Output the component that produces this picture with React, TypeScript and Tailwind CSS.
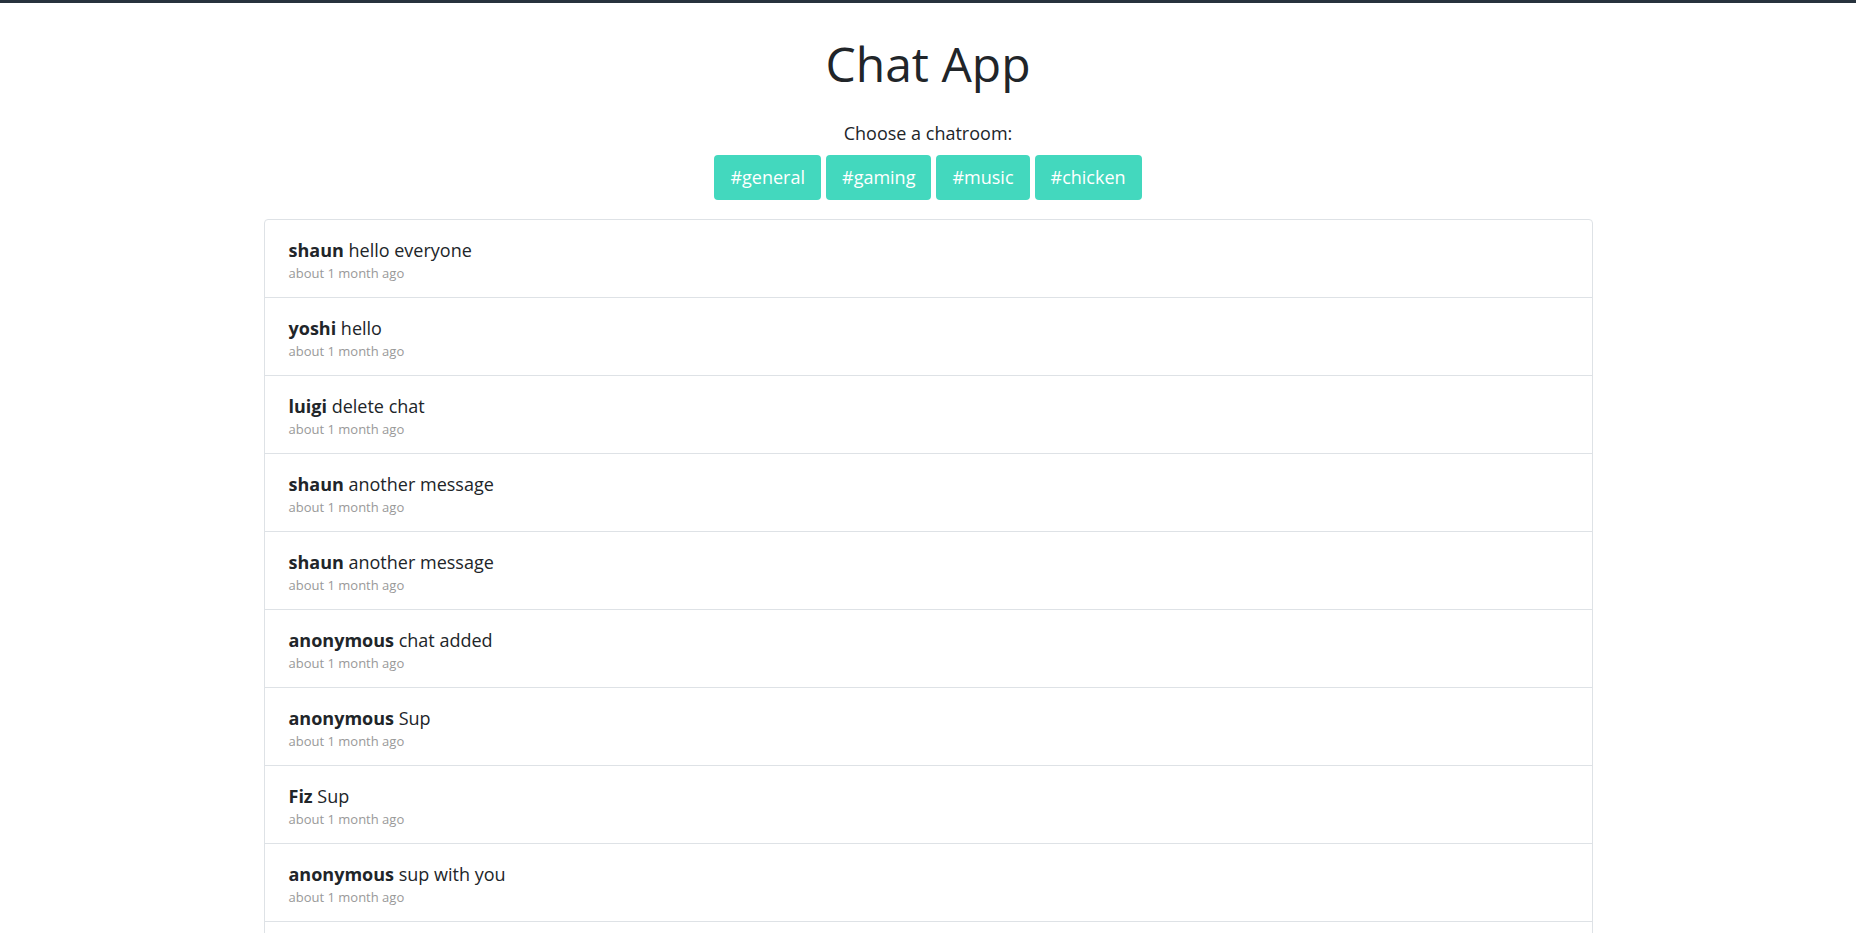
// App.tsx
// * chat app: room picker & message list

const rooms = ['general', 'gaming', 'music', 'chicken'];

const chats = [
  { name: 'shaun', message: 'hello everyone' },
  { name: 'yoshi', message: 'hello' },
  { name: 'luigi', message: 'delete chat' },
  { name: 'shaun', message: 'another message' },
  { name: 'shaun', message: 'another message' },
  { name: 'anonymous', message: 'chat added' },
  { name: 'anonymous', message: 'Sup' },
  { name: 'Fiz', message: 'Sup' },
  { name: 'anonymous', message: 'sup with you' },
  { name: 'anonymous', message: 'test' },
  { name: 'anonymous', message: 'hi' },
];

export default function App() {
  return (
    <div className="min-h-screen bg-white border-t-[3px] border-[#27323d] font-['Open_Sans','Noto_Sans',sans-serif] text-[#212529]">
      {/* Header */}
      <h1 className="pt-[31px] text-center text-[48px] leading-[60px] font-medium">Chat App</h1>

      {/* Room buttons */}
      <div className="mt-[25px] flex flex-col items-center">
        <p className="text-[18px] leading-[28px]">Choose a chatroom:</p>
        <div className="mt-[8px] flex gap-[5px]">
          {rooms.map((room) => (
            <button
              key={room}
              className="h-[45px] px-[16px] rounded-[4px] bg-[#43d8be] text-white text-[18px]"
            >
              #{room}
            </button>
          ))}
        </div>
      </div>

      {/* Chat list */}
      <ul className="mx-auto mt-[19px] w-[1329px] border border-[#dee2e6] rounded-[4px]">
        {chats.map((chat, i) => (
          <li key={i} className="h-[78px] border-b border-[#dee2e6] px-6 pt-[16px]">
            <div className="text-[18px] leading-[28px]">
              <span className="font-bold">{chat.name}</span> {chat.message}
            </div>
            <div className="text-[13px] leading-[19px] text-[#999999]">about 1 month ago</div>
          </li>
        ))}
      </ul>
    </div>
  );
}
